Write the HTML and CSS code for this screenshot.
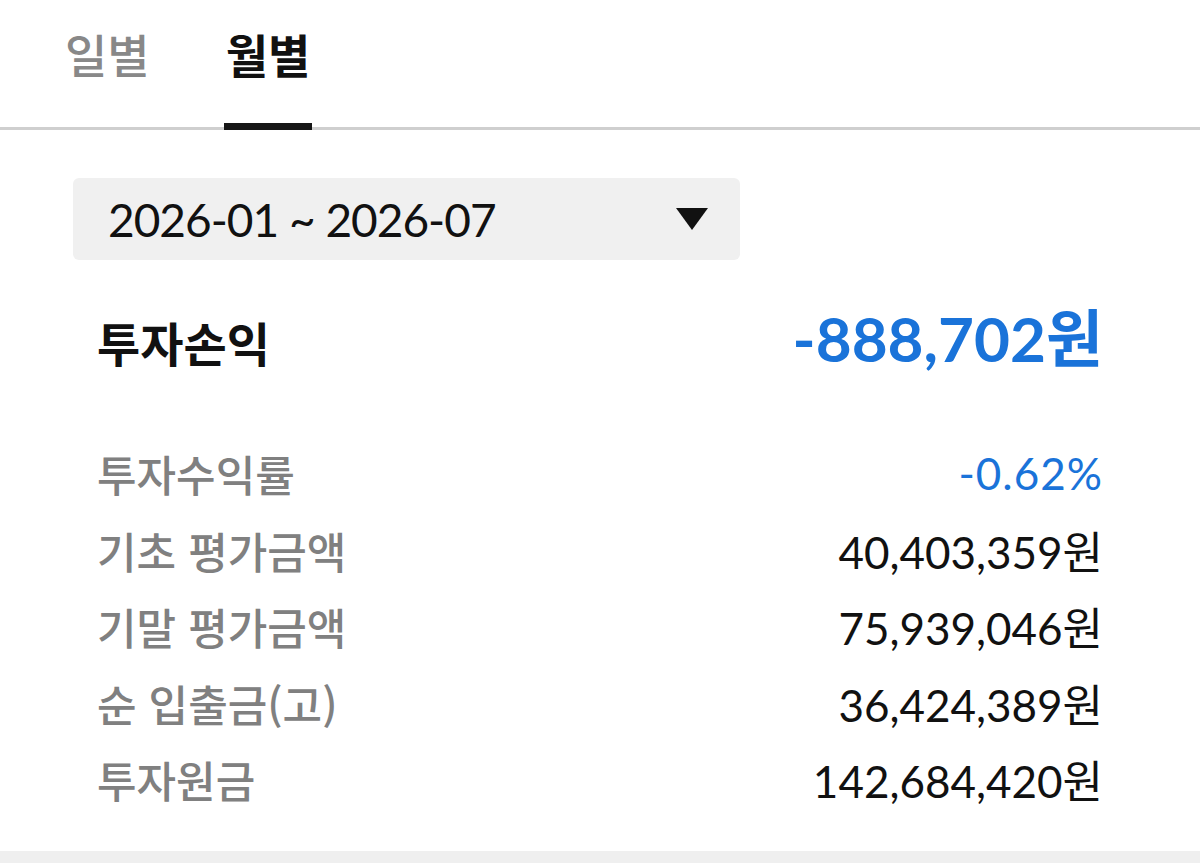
FILE: index.html
```html
<!DOCTYPE html>
<html lang="ko">
<head>
    <meta charset="UTF-8">
    <meta name="viewport" content="width=device-width, initial-scale=1.0">
    <title>투자손익</title>
    <link rel="stylesheet" href="styles.css">
</head>
<body>

<div class="page">
    <div class="tabs">
        <div class="tab">일별</div>
        <div class="tab active">월별</div>
    </div>

    <div class="period">
        <span class="periodText">2026-01 ~ 2026-07</span>
        <svg class="caret" width="32" height="22" viewBox="0 0 32 22">
            <polygon points="0,0 32,0 16,22" fill="#111"/>
        </svg>
    </div>

    <div class="summary">
        <div class="summaryLabel">투자손익</div>
        <div class="summaryValue minus">-888,702원</div>
    </div>

    <div class="details">
        <div class="row">
            <div class="label">투자수익률</div>
            <div class="value minus rate">-0.62%</div>
        </div>
        <div class="row">
            <div class="label">기초 평가금액</div>
            <div class="value">40,403,359원</div>
        </div>
        <div class="row">
            <div class="label">기말 평가금액</div>
            <div class="value">75,939,046원</div>
        </div>
        <div class="row">
            <div class="label">순 입출금(고)</div>
            <div class="value">36,424,389원</div>
        </div>
        <div class="row">
            <div class="label">투자원금</div>
            <div class="value">142,684,420원</div>
        </div>
    </div>
</div>
<div class="footerBand"></div>

</body>
</html>
```

FILE: styles.css
```css
body {
    font-family: Lato, "Noto Sans CJK KR", sans-serif;
    margin: 0;
    padding: 0;
    background: #fff;
    color: #111;
    overflow: hidden;
}
.page {
    height: 851px;
}
.tabs {
    display: flex;
    gap: 72px;
    height: 130px;
    box-sizing: border-box;
    padding-left: 63px;
    border-bottom: 3px solid #cfcfcf;
}
.tab {
    font-family: "Noto Sans CJK KR", sans-serif;
    font-size: 46px;
    font-weight: 500;
    line-height: 60px;
    padding: 23px 2px 0;
    color: #888;
    box-sizing: border-box;
}
.tab.active {
    color: #111;
    font-weight: bold;
    border-bottom: 7px solid #161616;
    margin-bottom: -3px;
}
.period {
    display: flex;
    align-items: center;
    justify-content: space-between;
    width: 667px;
    height: 82px;
    box-sizing: border-box;
    margin: 48px 0 0 73px;
    padding: 0 32px 0 35px;
    background: #f0f0f0;
    border-radius: 6px;
}
.periodText {
    font-size: 46px;
    letter-spacing: -1px;
    color: #111;
}
.caret {
    display: block;
}
.summary {
    display: flex;
    justify-content: space-between;
    align-items: baseline;
    padding: 0 97px 0 97px;
    margin-top: 30px;
}
.summaryLabel {
    font-family: "Noto Sans CJK KR", sans-serif;
    font-size: 47px;
    font-weight: bold;
}
.summaryValue {
    font-size: 62px;
    font-weight: bold;
}
.minus {
    color: #1a73d9;
}
.details {
    padding: 0 97px 0 97px;
    margin-top: 55px;
}
.row {
    display: flex;
    justify-content: space-between;
    align-items: center;
    height: 76.5px;
}
.label {
    font-family: "Noto Sans CJK KR", sans-serif;
    font-size: 43px;
    font-weight: 500;
    color: #808080;
}
.value {
    font-size: 44px;
}
.value.rate {
    letter-spacing: 1px;
}
.footerBand {
    height: 12px;
    background: #efefef;
}
```
